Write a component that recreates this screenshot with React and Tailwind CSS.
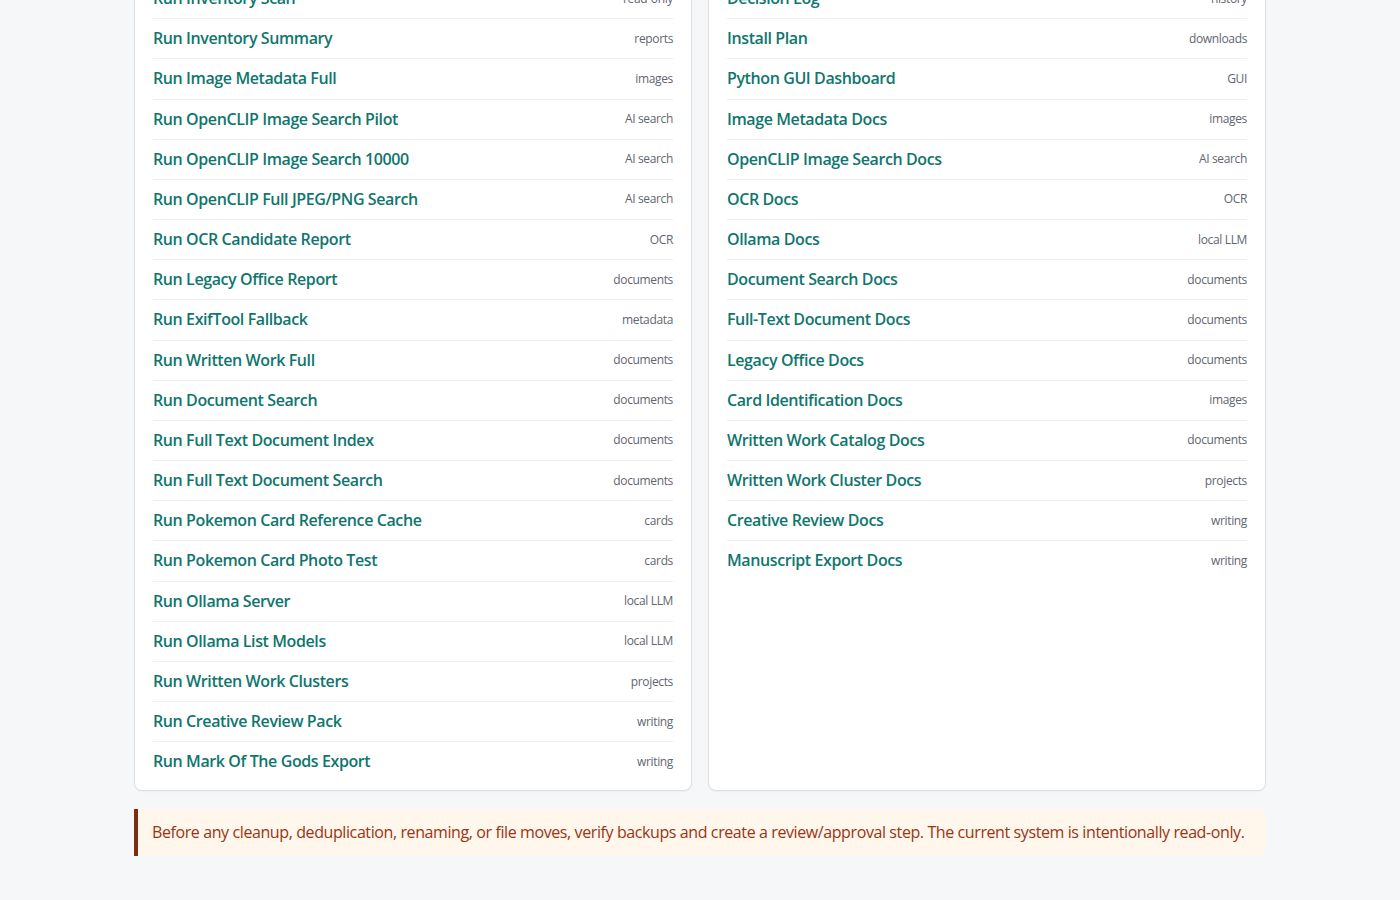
const leftLinks = [
  ["Run Inventory Scan", "read-only"],
  ["Run Inventory Summary", "reports"],
  ["Run Image Metadata Full", "images"],
  ["Run OpenCLIP Image Search Pilot", "AI search"],
  ["Run OpenCLIP Image Search 10000", "AI search"],
  ["Run OpenCLIP Full JPEG/PNG Search", "AI search"],
  ["Run OCR Candidate Report", "OCR"],
  ["Run Legacy Office Report", "documents"],
  ["Run ExifTool Fallback", "metadata"],
  ["Run Written Work Full", "documents"],
  ["Run Document Search", "documents"],
  ["Run Full Text Document Index", "documents"],
  ["Run Full Text Document Search", "documents"],
  ["Run Pokemon Card Reference Cache", "cards"],
  ["Run Pokemon Card Photo Test", "cards"],
  ["Run Ollama Server", "local LLM"],
  ["Run Ollama List Models", "local LLM"],
  ["Run Written Work Clusters", "projects"],
  ["Run Creative Review Pack", "writing"],
  ["Run Mark Of The Gods Export", "writing"],
];

const rightLinks = [
  ["Decision Log", "history"],
  ["Install Plan", "downloads"],
  ["Python GUI Dashboard", "GUI"],
  ["Image Metadata Docs", "images"],
  ["OpenCLIP Image Search Docs", "AI search"],
  ["OCR Docs", "OCR"],
  ["Ollama Docs", "local LLM"],
  ["Document Search Docs", "documents"],
  ["Full-Text Document Docs", "documents"],
  ["Legacy Office Docs", "documents"],
  ["Card Identification Docs", "images"],
  ["Written Work Catalog Docs", "documents"],
  ["Written Work Cluster Docs", "projects"],
  ["Creative Review Docs", "writing"],
  ["Manuscript Export Docs", "writing"],
];

function LinkRow({ title, tag }) {
  return (
    <li className="flex items-center justify-between border-b border-[#eceef1] py-[9px] last:border-b-0">
      <a href="#" className="text-[16px] leading-[21.17px] font-semibold text-[#0f766e] tracking-[-0.4px]">
        {title}
      </a>
      <span className="text-[12px] leading-[16px] text-[#5f6670] tracking-[-0.35px]">{tag}</span>
    </li>
  );
}

function LinkCard({ links }) {
  return (
    <section className="rounded-[8px] border border-[#dcdfe4] bg-white px-[18px] pt-[10px] pb-[9px] shadow-[0_1px_2px_rgba(0,0,0,0.04)]">
      <ul className="flex flex-col">
        {links.map(([t, g]) => (
          <LinkRow key={t} title={t} tag={g} />
        ))}
      </ul>
    </section>
  );
}

export default function App() {
  return (
    <div
      className="min-h-[900px] overflow-hidden bg-[#f6f7f9]"
      style={{ fontFamily: '"Segoe UI", "Open Sans", "Noto Sans", sans-serif' }}
    >
      <main className="mx-auto w-[1132px] -mt-[32px]">
        <div className="grid grid-cols-2 gap-[16px]">
          <LinkCard links={leftLinks} />
          <LinkCard links={rightLinks} />
        </div>
        <p className="mt-[18px] rounded-r-[6px] border-l-4 border-[#7c2d12] bg-[#fff6ec] py-[13px] pl-[14px] pr-4 text-[16px] leading-[21px] tracking-[-0.4px] text-[#9a3412]">
          Before any cleanup, deduplication, renaming, or file moves, verify backups and create a review/approval step. The current system is intentionally read-only.
        </p>
      </main>
    </div>
  );
}
